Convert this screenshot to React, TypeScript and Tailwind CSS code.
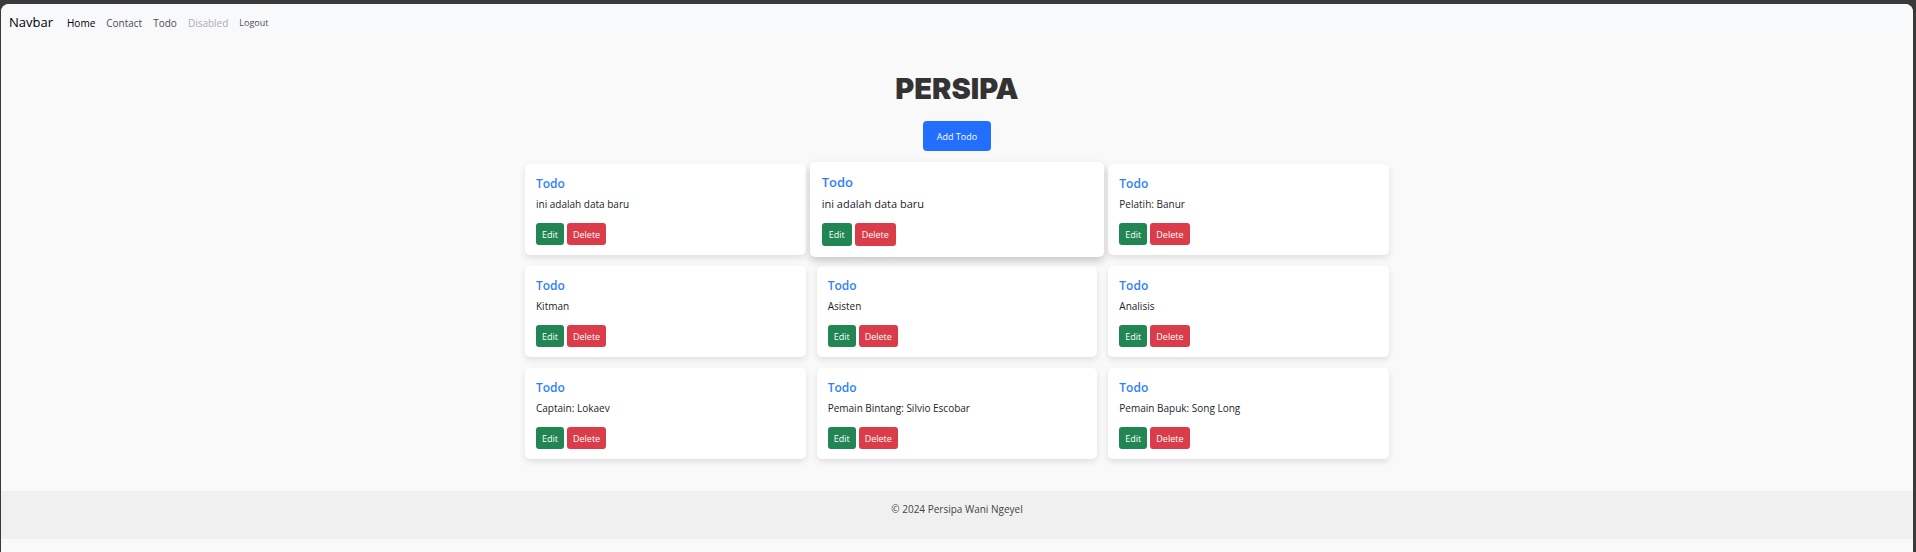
type Todo = { id: number; text: string; raised?: boolean };

const todos: Todo[] = [
  { id: 1, text: "ini adalah data baru" },
  { id: 2, text: "ini adalah data baru", raised: true },
  { id: 3, text: "Pelatih: Banur" },
  { id: 4, text: "Kitman" },
  { id: 5, text: "Asisten" },
  { id: 6, text: "Analisis" },
  { id: 7, text: "Captain: Lokaev" },
  { id: 8, text: "Pemain Bintang: Silvio Escobar" },
  { id: 9, text: "Pemain Bapuk: Song Long" },
];

function Navbar() {
  return (
    <nav className="flex h-[38px] items-center bg-[#f8f9fa] px-2 text-[10px] text-[#4d4e4e]">
      <a href="#" className="mr-[14px] text-[13px] text-black">
        Navbar
      </a>
      <ul className="flex items-center gap-[11px]">
        <li>
          <a href="#" className="text-black" aria-current="page">
            Home
          </a>
        </li>
        <li>
          <a href="#contact">Contact</a>
        </li>
        <li>
          <a href="#todo">Todo</a>
        </li>
        <li>
          <a href="#disabled" aria-disabled="true" className="text-[#acadad]">
            Disabled
          </a>
        </li>
        <li className="flex">
          <button type="button" className="text-[9px]">
            Logout
          </button>
        </li>
      </ul>
    </nav>
  );
}

function TodoCard({ todo }: { todo: Todo }) {
  const { raised } = todo;
  const card = raised
    ? "relative z-10 -mx-[7px] -my-[2px] px-3 pt-3 pb-[11px] shadow-[0_4px_8px_rgba(0,0,0,0.2)]"
    : "px-[11px] pt-3 pb-[10px] shadow-[0_3px_6px_rgba(0,0,0,0.1)]";
  const button =
    "rounded-[3px] pt-px text-[9px] font-medium text-white " + (raised ? "h-[23px] px-[7px]" : "h-[22px] px-1.5");
  return (
    <article className={"rounded-[5px] bg-white " + card}>
      <h2 className={"leading-4 font-semibold text-[#2f7fff] " + (raised ? "text-[13px]" : "text-[12px]")}>Todo</h2>
      <p className={"leading-4 text-[#212529] " + (raised ? "mt-1.5 text-[11px]" : "mt-1 text-[10px]")}>
        {todo.text}
      </p>
      <div className="mt-[11px] flex gap-[3px]">
        <button type="button" className={button + " bg-[#228654]"}>
          Edit
        </button>
        <button type="button" className={button + " bg-[#da3d49]"}>
          Delete
        </button>
      </div>
    </article>
  );
}

export default function App() {
  return (
    <div className="min-h-screen bg-[#3a3a3a] pt-1 pr-[3px] pl-px font-['Open_Sans','Noto_Sans',sans-serif]">
      <div className="min-h-[calc(100vh-4px)] overflow-hidden rounded-t-lg bg-[#f9f9f9]">
        <Navbar />
        <main className="mx-auto flex w-full max-w-[864px] flex-col items-center pt-7 pb-8">
          <h1 className="font-['Inter',sans-serif] text-[29px] leading-[38px] font-black text-[#333333]">PERSIPA</h1>
          <button
            type="button"
            className="mt-[13px] h-[30px] rounded-[4px] bg-[#216eff] px-[14px] pt-px text-[9px] font-medium text-white"
          >
            Add Todo
          </button>
          <section className="mt-[13px] grid w-full grid-cols-3 gap-[11px]">
            {todos.map((todo) => (
              <TodoCard key={todo.id} todo={todo} />
            ))}
          </section>
        </main>
        <footer className="h-12 bg-[#f0f0f0] pt-[10px] text-center text-[10px] leading-4 text-[#444444]">
          © 2024 Persipa Wani Ngeyel
        </footer>
      </div>
    </div>
  );
}
